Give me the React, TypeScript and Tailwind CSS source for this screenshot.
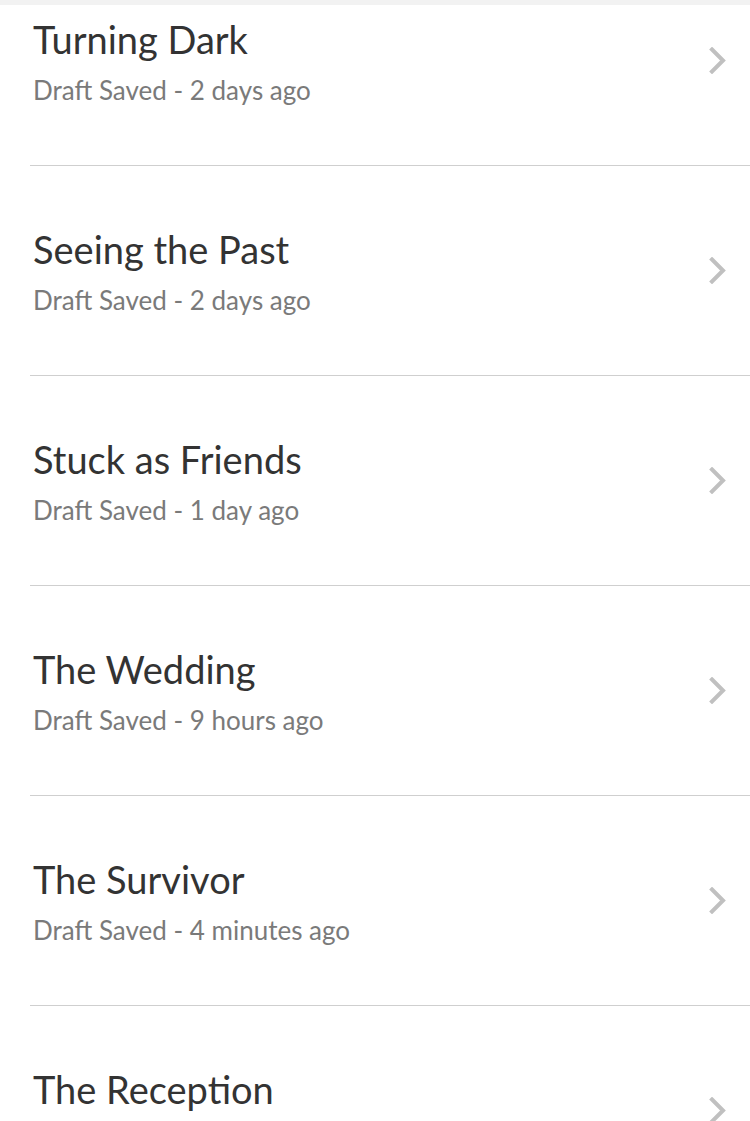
import React from "react";

const rows = [
  { title: "Turning Dark", sub: "Draft Saved - 2 days ago" },
  { title: "Seeing the Past", sub: "Draft Saved - 2 days ago" },
  { title: "Stuck as Friends", sub: "Draft Saved - 1 day ago" },
  { title: "The Wedding", sub: "Draft Saved - 9 hours ago" },
  { title: "The Survivor", sub: "Draft Saved - 4 minutes ago" },
  { title: "The Reception", sub: "Draft Saved - 1 minute ago" },
];

function Chevron() {
  return (
    <svg width="18" height="27" viewBox="0 0 18 27" className="shrink-0">
      <path d="M3 2.5 L14 13.5 L3 24.5" fill="none" stroke="#c0c0c0" strokeWidth="4" strokeLinecap="square" />
    </svg>
  );
}

export default function App() {
  return (
    <div className="w-[750px] h-[1121px] bg-white overflow-hidden" style={{ fontFamily: "Lato, 'Liberation Sans', sans-serif" }}>
      <div className="h-[5px] bg-[#f2f2f2]" />
      <div className="h-[1116px] overflow-hidden">
        <div className="-mt-[49px]">
          {rows.map((r) => (
            <div key={r.title} className="ml-[30px] h-[210px] border-b border-[#cfcfcf] flex items-center pr-[23px]">
              <div className="flex-1 pl-[3px] pt-[4px]">
                <div className="text-[38px] leading-[44px] text-[#333333]">{r.title}</div>
                <div className="text-[26px] leading-[36px] text-[#7a7a7a] mt-[11px]">{r.sub}</div>
              </div>
              <Chevron />
            </div>
          ))}
        </div>
      </div>
    </div>
  );
}
